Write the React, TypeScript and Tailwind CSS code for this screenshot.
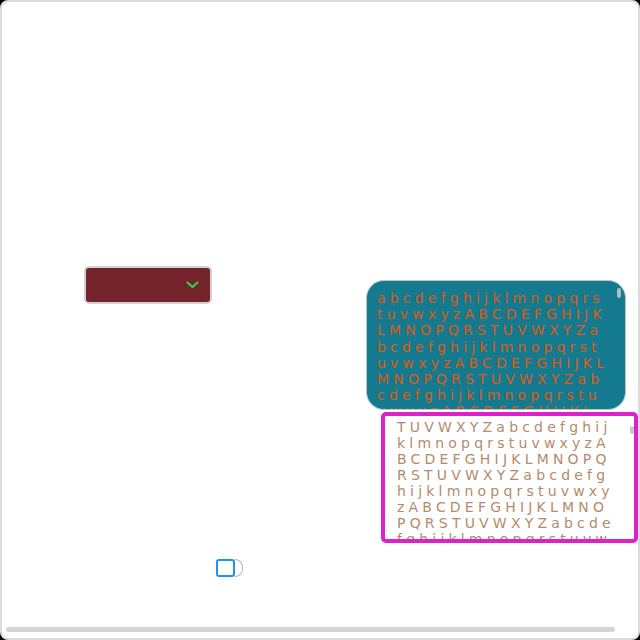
import React from "react";

const tealLines = [
  "abcdefghijklmnopqrs",
  "tuvwxyzABCDEFGHIJK",
  "LMNOPQRSTUVWXYZa",
  "bcdefghijklmnopqrst",
  "uvwxyzABCDEFGHIJKL",
  "MNOPQRSTUVWXYZab",
  "cdefghijklmnopqrstu",
  "vwxyzABCDEFGHIJKL",
];

const magentaLines = [
  "TUVWXYZabcdefghij",
  "klmnopqrstuvwxyzA",
  "BCDEFGHIJKLMNOPQ",
  "RSTUVWXYZabcdefg",
  "hijklmnopqrstuvwxy",
  "zABCDEFGHIJKLMNO",
  "PQRSTUVWXYZabcde",
  "fghijklmnopqrstuvw",
];

export default function App() {
  return (
    <div className="w-[640px] h-[640px] bg-black">
      <div className="w-[640px] h-[640px] bg-white border-2 border-[#dcdcdc] rounded-[8px] flex flex-col overflow-hidden">
        <div className="flex items-start mt-[264px]">
          <div className="ml-[82px] w-[128px] h-[38px] rounded-[5px] border-2 border-[#d2d2d2] bg-[#74232b] flex items-center justify-end pr-[11px]">
            <svg width="13" height="8" viewBox="0 0 13 8" fill="none">
              <path d="M1.5 1.5 L6.5 6 L11.5 1.5" stroke="#35d04a" strokeWidth="2.2" strokeLinecap="round" strokeLinejoin="round" />
            </svg>
          </div>
          <div className="ml-[154px] mt-[14px] flex flex-col">
            <div className="relative w-[260px] h-[130px] rounded-[18px] border border-[#b9c8cc] bg-[#137a8f] overflow-hidden pl-[10px] pt-[9px]">
              <div
                className="text-[14px] leading-[16.2px] tracking-[4.2px] text-[#dd5a17] whitespace-nowrap"
                style={{ fontFamily: '"DejaVu Sans", sans-serif' }}
              >
                {tealLines.map((l, i) => (
                  <div key={i}>{l}</div>
                ))}
              </div>
              <div className="absolute right-[4px] top-[7px] w-[4px] h-[10px] rounded-[2px] bg-[#a9bfc4]" />
            </div>
            <div className="relative ml-[15px] mt-[2px] w-[257px] h-[131px] rounded-[5px] border-4 border-[#dc22c8] bg-white overflow-hidden pl-[12px] pt-[3px]">
              <div
                className="text-[14px] leading-[16px] tracking-[4.2px] text-[#b48b6b] whitespace-nowrap"
                style={{ fontFamily: '"DejaVu Sans", sans-serif' }}
              >
                {magentaLines.map((l, i) => (
                  <div key={i}>{l}</div>
                ))}
              </div>
              <div className="absolute right-[0px] top-[10px] w-[4px] h-[8px] rounded-[2px] bg-[#c8c8c8]" />
            </div>
          </div>
        </div>
        <div className="ml-[214px] mt-[16px] flex items-center">
          <div className="w-[19px] h-[18px] rounded-[3px] border-2 border-[#2391f0] bg-white" />
          <div className="w-[8px] h-[18px] rounded-r-full border border-l-0 border-[#b8b0b8]" />
        </div>
        <div className="mt-auto mb-[6px] ml-[4px] w-[609px] h-[5px] rounded-full bg-[#d4d4d4]" />
      </div>
    </div>
  );
}
